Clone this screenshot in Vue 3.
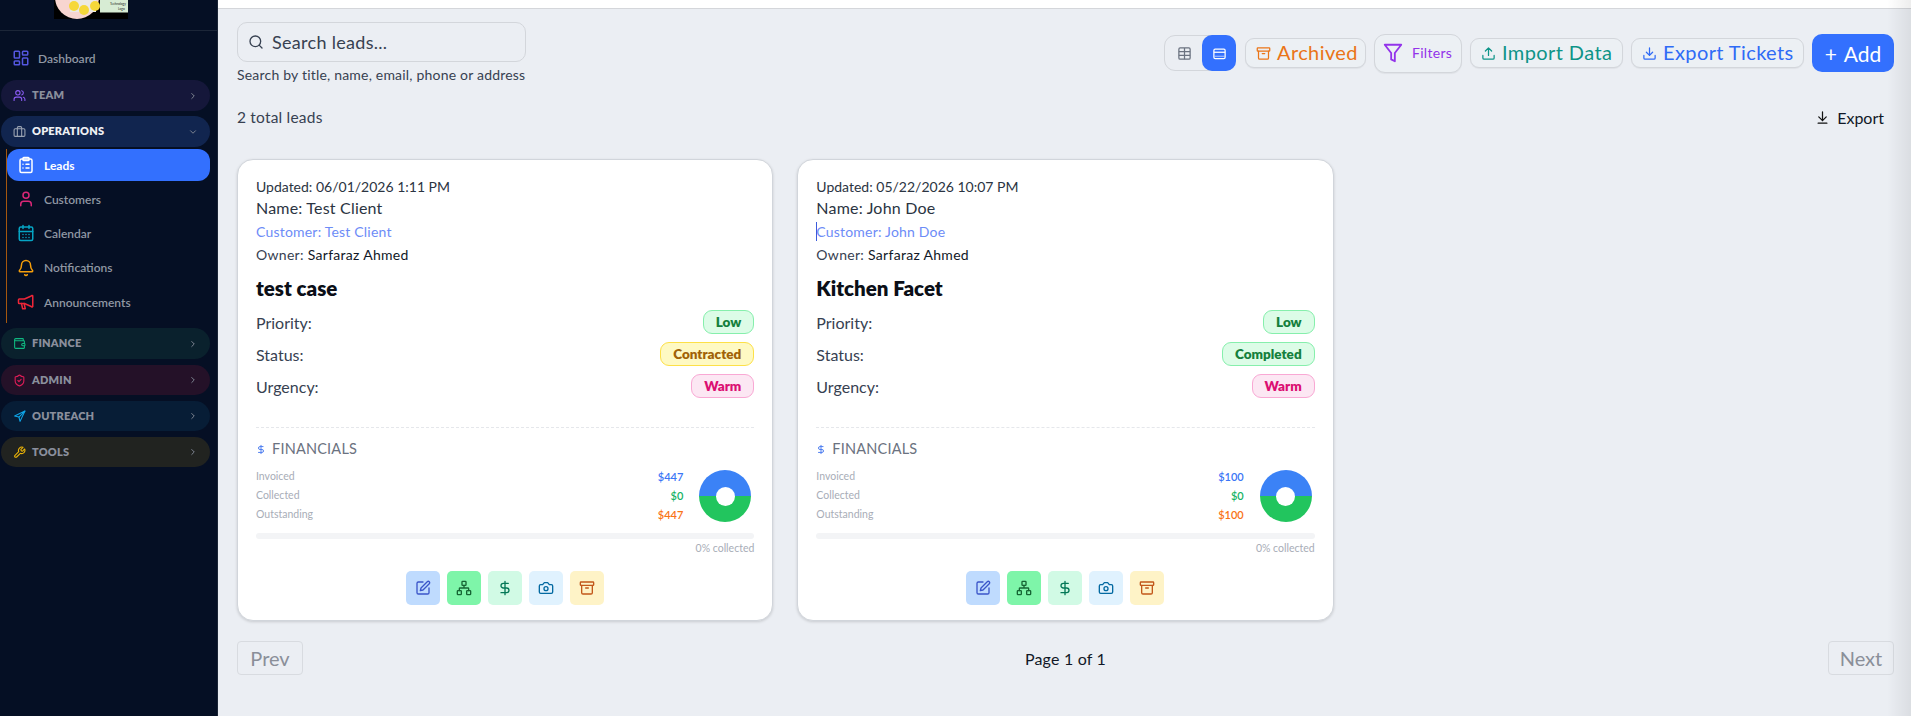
<script setup>
const leads = [
  {
    updated: '06/01/2026 1:11 PM',
    name: 'Test Client',
    caret: false,
    title: 'test case',
    status: 'Contracted',
    statusClass: 'b-yellow',
    invoiced: '$447',
    outstanding: '$447'
  },
  {
    updated: '05/22/2026 10:07 PM',
    name: 'John Doe',
    caret: true,
    title: 'Kitchen Facet',
    status: 'Completed',
    statusClass: 'b-green',
    invoiced: '$100',
    outstanding: '$100'
  }
]
</script>

<template>
  <div class="page">
    <aside class="sidebar">
      <div class="logo-wrap">
        <svg class="logo" width="74" height="19" viewBox="0 0 74 19">
          <rect width="74" height="19" fill="#000" />
          <circle cx="23" cy="-3" r="22" fill="#f8d5d0" />
          <rect x="16" width="26" height="12" fill="#ece9e6" />
          <rect x="46" width="28" height="12.500" fill="#d7ecd4" />
          <circle cx="20" cy="6" r="5" fill="#f6d83a" />
          <circle cx="41" cy="6" r="5" fill="#f6d83a" />
          <circle cx="30" cy="10" r="5" fill="#f6d83a" />
          <text x="56" y="5" font-size="3.200" fill="#222">Technology</text>
          <text x="64" y="9.500" font-size="3.200" fill="#222">Logo</text>
        </svg>
      </div>

      <nav class="nav">
        <a class="dash">
          <svg class="ic" viewBox="0 0 24 24" fill="none" stroke="#5457e0" stroke-width="2"><rect x="3" y="3" width="7" height="9" rx="1"/><rect x="14" y="3" width="7" height="5" rx="1"/><rect x="14" y="12" width="7" height="9" rx="1"/><rect x="3" y="16" width="7" height="5" rx="1"/></svg>
          Dashboard
        </a>

        <div class="group g-team">
          <svg class="gic" viewBox="0 0 24 24" fill="none" stroke="#8b5cf6" stroke-width="2" stroke-linecap="round"><path d="M16 21v-2a4 4 0 0 0-4-4H6a4 4 0 0 0-4 4v2"/><circle cx="9" cy="7" r="4"/><path d="M22 21v-2a4 4 0 0 0-3-3.900"/><path d="M16 3.100a4 4 0 0 1 0 7.800"/></svg>
          <span>TEAM</span>
          <svg class="chev" viewBox="0 0 24 24" fill="none" stroke="currentColor" stroke-width="2.400" stroke-linecap="round"><path d="m9 6 6 6-6 6"/></svg>
        </div>

        <div class="group g-ops">
          <svg class="gic" viewBox="0 0 24 24" fill="none" stroke="#9aa3b2" stroke-width="2"><rect x="2" y="7" width="20" height="14" rx="2"/><path d="M16 21V5a2 2 0 0 0-2-2h-4a2 2 0 0 0-2 2v16"/></svg>
          <span>OPERATIONS</span>
          <svg class="chev" viewBox="0 0 24 24" fill="none" stroke="currentColor" stroke-width="2.400" stroke-linecap="round"><path d="m6 9 6 6 6-6"/></svg>
        </div>

        <div class="subs">
          <a class="sub active">
            <svg class="sic" viewBox="0 0 24 24" fill="none" stroke="#fff" stroke-width="2" stroke-linecap="round"><rect x="4" y="4" width="16" height="18" rx="2"/><rect x="8" y="2" width="8" height="4" rx="1"/><path d="M12 11h4M12 16h4M8 11h.01M8 16h.01"/></svg>
            Leads
          </a>
          <a class="sub">
            <svg class="sic" viewBox="0 0 24 24" fill="none" stroke="#db2777" stroke-width="2" stroke-linecap="round"><path d="M19 21v-2a4 4 0 0 0-4-4H9a4 4 0 0 0-4 4v2"/><circle cx="12" cy="7" r="4"/></svg>
            Customers
          </a>
          <a class="sub">
            <svg class="sic" viewBox="0 0 24 24" fill="none" stroke="#06a5c4" stroke-width="2" stroke-linecap="round"><path d="M8 2v4M16 2v4"/><rect x="3" y="4" width="18" height="18" rx="2"/><path d="M3 10h18M8 14h.01M12 14h.01M16 14h.01M8 18h.01M12 18h.01M16 18h.01"/></svg>
            Calendar
          </a>
          <a class="sub">
            <svg class="sic" viewBox="0 0 24 24" fill="none" stroke="#f59e0b" stroke-width="2" stroke-linecap="round" stroke-linejoin="round"><path d="M10.300 21a2 2 0 0 0 3.400 0"/><path d="M3.300 15.300A1 1 0 0 0 4 17h16a1 1 0 0 0 .7-1.700C19.400 14 18 12.500 18 8A6 6 0 0 0 6 8c0 4.500-1.400 6-2.700 7.300"/></svg>
            Notifications
          </a>
          <a class="sub">
            <svg class="sic" viewBox="0 0 24 24" fill="none" stroke="#ef2638" stroke-width="2" stroke-linecap="round" stroke-linejoin="round"><path d="M2 9a1 1 0 0 1 1-1h7l9-4a1 1 0 0 1 2 .8v12.400a1 1 0 0 1-2 .8l-9-4H3a1 1 0 0 1-1-1z"/><path d="M6 14l1.500 7h3.500L9.500 14"/></svg>
            Announcements
          </a>
        </div>

        <div class="group g-fin">
          <svg class="gic" viewBox="0 0 24 24" fill="none" stroke="#10b981" stroke-width="2"><path d="M19 7V4a1 1 0 0 0-1-1H5a2 2 0 0 0 0 4h15a1 1 0 0 1 1 1v4h-3a2 2 0 0 0 0 4h3a1 1 0 0 0 1-1v-2a1 1 0 0 0-1-1"/><path d="M3 5v14a2 2 0 0 0 2 2h15a1 1 0 0 0 1-1v-4"/></svg>
          <span>FINANCE</span>
          <svg class="chev" viewBox="0 0 24 24" fill="none" stroke="currentColor" stroke-width="2.400" stroke-linecap="round"><path d="m9 6 6 6-6 6"/></svg>
        </div>
        <div class="group g-admin">
          <svg class="gic" viewBox="0 0 24 24" fill="none" stroke="#e11d58" stroke-width="2" stroke-linecap="round" stroke-linejoin="round"><path d="M20 13c0 5-3.500 7.500-7.700 8.900a1 1 0 0 1-.6 0C7.500 20.500 4 18 4 13V6a1 1 0 0 1 1-1c2 0 4.500-1.200 6.200-2.700a1.200 1.200 0 0 1 1.600 0C14.500 3.800 17 5 19 5a1 1 0 0 1 1 1z"/><path d="m9 12 2 2 4-4"/></svg>
          <span>ADMIN</span>
          <svg class="chev" viewBox="0 0 24 24" fill="none" stroke="currentColor" stroke-width="2.400" stroke-linecap="round"><path d="m9 6 6 6-6 6"/></svg>
        </div>
        <div class="group g-out">
          <svg class="gic" viewBox="0 0 24 24" fill="none" stroke="#0ea5e9" stroke-width="2" stroke-linecap="round" stroke-linejoin="round"><path d="M3 11 22 2l-9 19-2-8-8-2z"/><path d="M22 2 11 13"/></svg>
          <span>OUTREACH</span>
          <svg class="chev" viewBox="0 0 24 24" fill="none" stroke="currentColor" stroke-width="2.400" stroke-linecap="round"><path d="m9 6 6 6-6 6"/></svg>
        </div>
        <div class="group g-tools">
          <svg class="gic" viewBox="0 0 24 24" fill="none" stroke="#eab308" stroke-width="2" stroke-linecap="round" stroke-linejoin="round"><path d="M14.700 6.300a1 1 0 0 0 0 1.400l1.600 1.600a1 1 0 0 0 1.400 0l3.800-3.800a6 6 0 0 1-7.900 7.900l-6.900 6.900a2.100 2.100 0 0 1-3-3l6.900-6.900a6 6 0 0 1 7.900-7.900z"/></svg>
          <span>TOOLS</span>
          <svg class="chev" viewBox="0 0 24 24" fill="none" stroke="currentColor" stroke-width="2.400" stroke-linecap="round"><path d="m9 6 6 6-6 6"/></svg>
        </div>
      </nav>
    </aside>

    <main class="main">
      <div class="topbar"></div>
      <div class="content">
        <div class="toolbar">
          <div class="search-col">
            <div class="search">
              <svg class="search-ic" viewBox="0 0 24 24" fill="none" stroke="#374151" stroke-width="2" stroke-linecap="round"><circle cx="11" cy="11" r="8"/><path d="m21 21-4.300-4.300"/></svg>
              <span>Search leads...</span>
            </div>
            <div class="hint">Search by title, name, email, phone or address</div>
          </div>

          <div class="actions">
            <div class="toggle">
              <span class="tg">
                <svg viewBox="0 0 24 24" fill="none" stroke="#6b7280" stroke-width="2"><rect x="3" y="3" width="18" height="18" rx="2"/><path d="M3 9h18M3 15h18M12 3v18"/></svg>
              </span>
              <span class="tg on">
                <svg viewBox="0 0 24 24" fill="none" stroke="#fff" stroke-width="2"><rect x="3" y="5" width="18" height="15" rx="2"/><path d="M3 10h18"/><path d="M4 16.500h16" stroke-opacity="0.500"/></svg>
              </span>
            </div>
            <button class="btn archived">
              <svg viewBox="0 0 24 24" fill="none" stroke="currentColor" stroke-width="2" stroke-linecap="round"><rect x="2" y="3" width="20" height="5" rx="1"/><path d="M4 8v11a2 2 0 0 0 2 2h12a2 2 0 0 0 2-2V8M10 12h4"/></svg>
              Archived
            </button>
            <button class="btn filters">
              <svg viewBox="0 0 24 24" fill="none" stroke="#9333ea" stroke-width="2" stroke-linejoin="round"><path d="M3 3h18l-7 9v9l-4-2v-7z"/></svg>
              <span>Filters</span>
            </button>
            <button class="btn import">
              <svg viewBox="0 0 24 24" fill="none" stroke="currentColor" stroke-width="2" stroke-linecap="round" stroke-linejoin="round"><path d="M21 15v4a2 2 0 0 1-2 2H5a2 2 0 0 1-2-2v-4M17 8l-5-5-5 5M12 3v12"/></svg>
              Import Data
            </button>
            <button class="btn export-t">
              <svg viewBox="0 0 24 24" fill="none" stroke="currentColor" stroke-width="2" stroke-linecap="round" stroke-linejoin="round"><path d="M21 15v4a2 2 0 0 1-2 2H5a2 2 0 0 1-2-2v-4M7 10l5 5 5-5M12 15V3"/></svg>
              Export Tickets
            </button>
            <button class="add">+ Add</button>
          </div>
        </div>

        <div class="summary">
          <span>2 total leads</span>
          <span class="export">
            <svg viewBox="0 0 24 24" fill="none" stroke="#111" stroke-width="2" stroke-linecap="round" stroke-linejoin="round"><path d="M12 3v14M6 11l6 6 6-6M5 21h14"/></svg>
            Export
          </span>
        </div>

        <div class="cards">
          <article v-for="lead in leads" :key="lead.title" class="card">
            <div class="updated">Updated: {{ lead.updated }}</div>
            <div class="name">Name: {{ lead.name }}</div>
            <div class="customer"><i v-if="lead.caret" class="caret"></i>Customer: {{ lead.name }}</div>
            <div class="owner">Owner: <span>Sarfaraz Ahmed</span></div>
            <h3 class="title">{{ lead.title }}</h3>

            <div class="row"><span>Priority:</span><span class="badge b-green">Low</span></div>
            <div class="row"><span>Status:</span><span class="badge" :class="lead.statusClass">{{ lead.status }}</span></div>
            <div class="row"><span>Urgency:</span><span class="badge b-pink">Warm</span></div>

            <div class="fin">
              <div class="fin-head">
                <svg viewBox="0 0 24 24" fill="none" stroke="#4f7ff0" stroke-width="2.400" stroke-linecap="round" stroke-linejoin="round"><path d="M12 2v20M17 5H9.500a3.500 3.500 0 0 0 0 7h5a3.500 3.500 0 0 1 0 7H6"/></svg>
                FINANCIALS
              </div>
              <div class="fin-body">
                <div class="fin-rows">
                  <div class="fin-row"><span>Invoiced</span><b class="blue">{{ lead.invoiced }}</b></div>
                  <div class="fin-row"><span>Collected</span><b class="green">$0</b></div>
                  <div class="fin-row"><span>Outstanding</span><b class="orange">{{ lead.outstanding }}</b></div>
                </div>
                <div class="donut"></div>
              </div>
              <div class="progress"></div>
              <div class="pct">0% collected</div>
            </div>

            <div class="card-actions">
              <span class="act a1">
                <svg viewBox="0 0 24 24" fill="none" stroke="#3b55c9" stroke-width="2" stroke-linecap="round" stroke-linejoin="round"><path d="M12 3H5a2 2 0 0 0-2 2v14a2 2 0 0 0 2 2h14a2 2 0 0 0 2-2v-7"/><path d="M18.400 2.600a2.100 2.100 0 1 1 3 3L12 15l-4 1 1-4z"/></svg>
              </span>
              <span class="act a2">
                <svg viewBox="0 0 24 24" fill="none" stroke="#166534" stroke-width="2" stroke-linecap="round" stroke-linejoin="round"><rect x="16" y="16" width="6" height="6" rx="1"/><rect x="2" y="16" width="6" height="6" rx="1"/><rect x="9" y="2" width="6" height="6" rx="1"/><path d="M5 16v-3a1 1 0 0 1 1-1h12a1 1 0 0 1 1 1v3M12 12V8"/></svg>
              </span>
              <span class="act a3">
                <svg viewBox="0 0 24 24" fill="none" stroke="#047857" stroke-width="2" stroke-linecap="round" stroke-linejoin="round"><path d="M12 2v20M17 5H9.500a3.500 3.500 0 0 0 0 7h5a3.500 3.500 0 0 1 0 7H6"/></svg>
              </span>
              <span class="act a4">
                <svg viewBox="0 0 24 24" fill="none" stroke="#0369a1" stroke-width="2" stroke-linecap="round" stroke-linejoin="round"><path d="M14.500 4h-5L7 7H4a2 2 0 0 0-2 2v9a2 2 0 0 0 2 2h16a2 2 0 0 0 2-2V9a2 2 0 0 0-2-2h-3z"/><circle cx="12" cy="13" r="3"/></svg>
              </span>
              <span class="act a5">
                <svg viewBox="0 0 24 24" fill="none" stroke="#c2571a" stroke-width="2" stroke-linecap="round" stroke-linejoin="round"><rect x="2" y="3" width="20" height="5" rx="1"/><path d="M4 8v11a2 2 0 0 0 2 2h12a2 2 0 0 0 2-2V8M10 12h4"/></svg>
              </span>
            </div>
          </article>
        </div>

        <div class="pager">
          <button class="pg">Prev</button>
          <span class="pg-text">Page 1 of 1</span>
          <button class="pg">Next</button>
        </div>
      </div>
    </main>
  </div>
</template>

<style>
html, body {
  margin: 0;
  background: #ebeef3;
}
</style>

<style scoped>
.page {
  position: relative;
  display: flex;
  width: 1911px;
  height: 716px;
  overflow: hidden;
  font-family: Lato, "Noto Sans", sans-serif;
  color: #1f2937;
  background: #ebeef3;
}

/* soft shade along the right edge */
.page::after {
  content: "";
  position: absolute;
  top: 0;
  right: 0;
  bottom: 0;
  width: 24px;
  background: linear-gradient(to right, rgba(0, 0, 0, 0), rgba(0, 0, 0, 0.07));
  pointer-events: none;
}

.sidebar {
  width: 218px;
  flex: none;
  background: #050f24;
  border-right: 1px solid #1b2536;
  box-sizing: border-box;
}

.logo-wrap {
  height: 30px;
  display: flex;
  justify-content: center;
  border-bottom: 1px solid #1c2638;
  padding-right: 36px;
}

.logo {
  display: block;
}

.nav {
  display: flex;
  flex-direction: column;
  padding: 11px 7px 0 1px;
}

.dash {
  display: flex;
  align-items: center;
  gap: 8px;
  height: 32px;
  padding-left: 11px;
  margin-bottom: 6px;
  font-size: 12px;
  font-weight: 600;
  color: #9097a3;
}

.ic {
  width: 18px;
  height: 18px;
}

.group {
  display: flex;
  align-items: center;
  height: 30px;
  border-radius: 16px;
  padding: 0 12px;
  font-size: 11px;
  font-weight: 800;
  color: #8a8f9c;
  margin-bottom: 6px;
}

.group span {
  margin-left: 6px;
  letter-spacing: 0.2px;
  flex: 1;
  padding-bottom: 2px;
}

.gic {
  width: 13px;
  height: 13px;
}

.chev {
  width: 10px;
  height: 10px;
  color: #7d8491;
}

.g-team { background: #15173a; height: 31px; margin-bottom: 5px; }
.g-ops { background: #11254f; color: #eef0f4; height: 31px; margin-bottom: 2px; }
.g-fin { background: #0a212d; height: 31px; }
.g-admin { background: #241128; }
.g-out { background: #071d36; }
.g-tools { background: #212320; margin-bottom: 0; }

.subs {
  margin-left: 5px;
  border-left: 1px solid #a5570f;
  height: 174px;
  margin-bottom: 5px;
}

.sub {
  display: flex;
  align-items: center;
  height: 34.300px;
  padding-left: 10px;
  font-size: 12px;
  font-weight: 600;
  color: #9097a3;
  gap: 9px;
}

.sub.active {
  background: #3370fe;
  color: #fff;
  height: 32px;
  border-radius: 12px;
  margin-bottom: 1px;
  font-weight: 700;
}

.sic {
  width: 18px;
  height: 18px;
}

.main {
  flex: 1;
  min-width: 0;
}

.topbar {
  height: 8px;
  background: #fff;
  border-bottom: 1px solid #d4d6da;
}

.content {
  padding: 13px 17px 0 19px;
}

.toolbar {
  display: flex;
  justify-content: space-between;
  align-items: flex-start;
}

.search {
  display: flex;
  align-items: center;
  width: 289px;
  height: 40px;
  box-sizing: border-box;
  border: 1px solid #d3d6db;
  border-radius: 10px;
  padding-left: 10px;
  font-size: 18px;
  letter-spacing: 0.3px;
  color: #374151;
  gap: 8px;
}

.search-ic {
  width: 16px;
  height: 16px;
}

.hint {
  margin-top: 4px;
  font-size: 14px;
  letter-spacing: 0.2px;
  color: #374151;
}

.actions {
  display: flex;
  align-items: center;
  gap: 8px;
  height: 50px;
  margin-top: 6px;
}

.toggle {
  display: flex;
  width: 72px;
  height: 36px;
  border: 1px solid #d3d6db;
  border-radius: 11px;
  box-sizing: border-box;
  margin-right: 1px;
}

.tg {
  display: flex;
  align-items: center;
  justify-content: center;
  flex: 1;
  margin: -1px;
}

.tg svg {
  width: 15px;
  height: 15px;
}

.tg.on {
  background: #3370fe;
  border-radius: 10px;
  flex: none;
  width: 34px;
}

.btn {
  display: inline-flex;
  align-items: center;
  gap: 6px;
  height: 30px;
  padding: 0 0 2px 10px;
  background: #ecf0f4;
  border: 1px solid #d3d6db;
  border-radius: 9px;
  box-shadow: 0 1px 1px rgba(0, 0, 0, 0.05);
  font-family: inherit;
  font-size: 20px;
  letter-spacing: 0.4px;
}

.btn svg {
  width: 15px;
  height: 15px;
  flex: none;
  margin-top: 2px;
}

.archived { color: #ea7417; width: 121px; }
.import { color: #0d9488; width: 153px; }
.export-t { color: #2f6bf6; width: 173px; }

.filters {
  height: 39px;
  width: 88px;
  color: #9333ea;
  font-size: 14px;
  letter-spacing: 0.3px;
  gap: 8px;
  padding-left: 7px;
  border-radius: 11px;
}

.filters svg {
  width: 22px;
  height: 22px;
}

.add {
  height: 38px;
  width: 82px;
  border: 0;
  border-radius: 10px;
  background: #3370fe;
  color: #fff;
  font-family: inherit;
  font-size: 21px;
  word-spacing: 2px;
}

.summary {
  display: flex;
  justify-content: space-between;
  align-items: center;
  margin-top: 22px;
  height: 24px;
  font-size: 15.500px;
  letter-spacing: 0.2px;
  color: #374151;
}

.export {
  display: flex;
  align-items: center;
  gap: 7px;
  font-size: 16px;
  letter-spacing: 0;
  color: #111827;
  padding-right: 10px;
}

.export svg {
  width: 15px;
  height: 15px;
}

.cards {
  display: grid;
  grid-template-columns: repeat(3, 1fr);
  gap: 24px;
  margin-top: 30px;
}

.card {
  background: #fff;
  border: 1px solid #d1d5db;
  border-radius: 16px;
  box-shadow: 0 1px 3px rgba(0, 0, 0, 0.15);
  padding: 17px 18px 17px;
  height: 462px;
  box-sizing: border-box;
}

.updated {
  font-size: 14px;
  line-height: 19px;
  color: #2b3442;
}

.name {
  font-size: 16px;
  line-height: 22px;
  margin-top: 1px;
  letter-spacing: 0.2px;
  color: #2b3442;
}

.customer {
  position: relative;
  font-size: 14px;
  line-height: 20px;
  margin-top: 3px;
  letter-spacing: 0.2px;
  color: #6d8cf7;
}

.caret {
  position: absolute;
  left: 0;
  top: 0;
  width: 1px;
  height: 19px;
  background: #3b5bdb;
}

.owner {
  font-size: 14px;
  line-height: 20px;
  margin-top: 3px;
  letter-spacing: 0.3px;
  color: #374151;
}

.owner span {
  color: #111827;
}

.title {
  margin: 10px 0 0;
  font-size: 20.500px;
  line-height: 27px;
  font-weight: 800;
  color: #0b0f17;
}

.row {
  display: flex;
  justify-content: space-between;
  align-items: center;
  height: 24px;
  margin-top: 8px;
  font-size: 16px;
  color: #374151;
}

.badge {
  display: inline-flex;
  align-items: center;
  height: 24px;
  box-sizing: border-box;
  padding: 0 12px;
  border-radius: 9px;
  border: 1px solid;
  font-size: 13.500px;
  font-weight: 800;
}

.b-green { background: #dcfce7; border-color: #86efac; color: #15803d; }
.b-yellow { background: #fef9c3; border-color: #fde047; color: #a16207; }
.b-pink { background: #fce7f3; border-color: #f9a8d4; color: #db0f72; }

.fin {
  margin-top: 29px;
  border-top: 1px dashed #e5e7eb;
}

.fin-head {
  display: flex;
  align-items: center;
  gap: 6px;
  margin-top: 10px;
  height: 20px;
  font-size: 14.500px;
  letter-spacing: 0.2px;
  color: #6b7280;
}

.fin-head svg {
  width: 10px;
  height: 13px;
  margin-top: 2px;
}

.fin-body {
  display: flex;
  align-items: flex-start;
  margin-top: 1px;
}

.fin-rows {
  flex: 1;
  padding-top: 8px;
}

.fin-row {
  display: flex;
  justify-content: space-between;
  height: 19px;
  line-height: 19px;
  font-size: 10.500px;
  color: #a8adb7;
}

.fin-row b {
  font-size: 11px;
  font-weight: 600;
}

.blue { color: #3b76f6; }
.green { color: #16b364; }
.orange { color: #f97316; }

.donut {
  position: relative;
  width: 52px;
  height: 52px;
  margin: 11px 3px 0 16px;
  border-radius: 50%;
  background: linear-gradient(#3b82f6 50%, #22c55e 50%);
}

.donut::after {
  content: "";
  position: absolute;
  left: 16.500px;
  top: 16.500px;
  width: 19px;
  height: 19px;
  border-radius: 50%;
  background: #fff;
}

.progress {
  height: 6px;
  border-radius: 3px;
  background: #f3f4f6;
  margin-top: 9px;
}

.pct {
  text-align: right;
  font-size: 10.500px;
  line-height: 14px;
  margin-top: 2px;
  color: #a8adb7;
}

.card-actions {
  display: flex;
  justify-content: center;
  gap: 7px;
  margin-top: 16px;
}

.act {
  display: flex;
  align-items: center;
  justify-content: center;
  width: 34px;
  height: 34px;
  border-radius: 5px;
}

.act svg {
  width: 16px;
  height: 16px;
}

.a1 { background: #bfdbfe; }
.a2 { background: #7ef5a9; }
.a3 { background: #d1fae5; }
.a4 { background: #e0f2fe; }
.a5 { background: #fef3c7; }

.pager {
  display: flex;
  justify-content: space-between;
  align-items: center;
  margin-top: 20px;
}

.pg {
  height: 34px;
  width: 66px;
  background: #ebeef3;
  border: 1px solid #d8dbe0;
  border-radius: 4px;
  font-family: inherit;
  font-size: 20px;
  color: #8a8f99;
}

.pg-text {
  font-size: 16px;
  letter-spacing: 0.2px;
  color: #111827;
}
</style>
